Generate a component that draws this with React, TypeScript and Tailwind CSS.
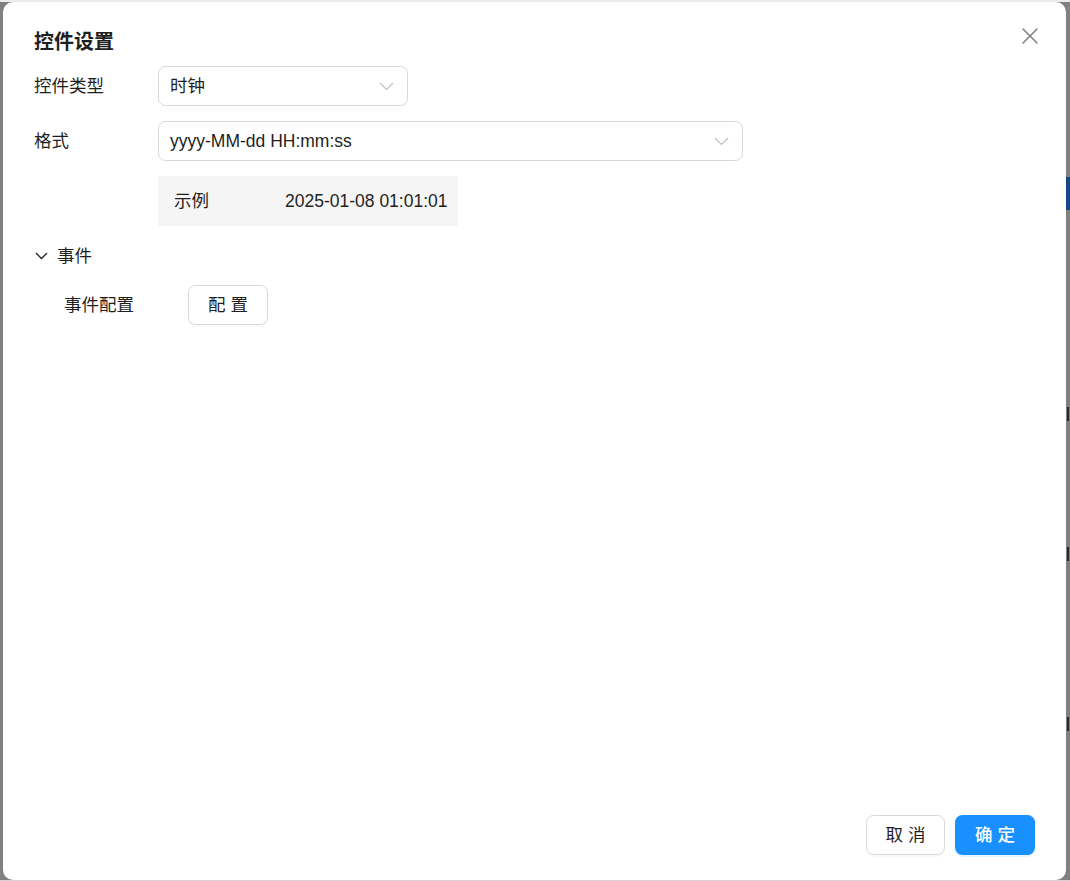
import { X } from "lucide-react";

const font = { fontFamily: '"Liberation Sans", "Noto Sans CJK SC", sans-serif' };

function Select({ value, width }: { value: string; width: string }) {
  return (
    <div
      className={`flex h-10 items-center justify-between rounded-[7.5px] border border-[#d9d9d9] bg-white pl-[11px] pr-[13px] ${width}`}
    >
      <span className="whitespace-nowrap text-[17.5px] text-[#1f1f1f]">{value}</span>
      <svg width="15" height="9" viewBox="0 0 15 9" fill="none" className="shrink-0">
        <path d="M1 1 L7.5 7.5 L14 1" stroke="#bfbfbf" strokeWidth="1.2" />
      </svg>
    </div>
  );
}

function Row({ label, children }: { label: string; children: React.ReactNode }) {
  return (
    <div className="flex items-center">
      <div className="w-[124px] shrink-0 text-[17.5px] text-[#1f1f1f]">{label}</div>
      {children}
    </div>
  );
}

export default function App() {
  return (
    <div className="flex h-[881px] w-[1070px] flex-col overflow-hidden" style={font}>
      <div className="h-[2px] bg-[#ebebeb]" />
      <div className="flex flex-1 bg-[#808080]">
        <div className="w-[3px] shrink-0" />

        {/* dialog */}
        <div className="relative flex flex-1 flex-col rounded-[10px] bg-white px-[31px] pb-[25px] pt-[25px]">
          <button
            type="button"
            className="absolute right-[22px] top-[20px] flex h-7 w-7 items-center justify-center text-[#808080]"
          >
            <X className="h-[28px] w-[28px]" strokeWidth={1.3} />
          </button>

          <h2 className="h-[30px] text-[20px] font-semibold leading-[30px] text-[#1f1f1f]">控件设置</h2>

          <div className="mt-[9px] flex flex-1 flex-col">
            <div className="flex flex-col gap-[15px]">
              <Row label="控件类型">
                <Select value="时钟" width="w-[250px]" />
              </Row>
              <Row label="格式">
                <Select value="yyyy-MM-dd HH:mm:ss" width="w-[585px]" />
              </Row>
              <Row label="">
                <div className="flex h-[50px] w-[300px] items-center whitespace-nowrap bg-[#f5f5f5] px-4 text-[17.5px] text-[#1f1f1f]">
                  <span className="w-[111px] shrink-0">示例</span>
                  <span>2025-01-08 01:01:01</span>
                </div>
              </Row>
            </div>

            <div className="mt-[17px] flex h-[26px] items-center gap-[9px] text-[17.5px] text-[#1f1f1f]">
              <svg width="13" height="8" viewBox="0 0 13 8" fill="none" className="ml-[1px]">
                <path d="M1 1 L6.5 6.5 L12 1" stroke="#1f1f1f" strokeWidth="1.3" />
              </svg>
              <span>事件</span>
            </div>

            <div className="mt-[16px] pl-[30px]">
              <Row label="事件配置">
                <button
                  type="button"
                  className="h-10 w-[80px] whitespace-pre rounded-[7.5px] border border-[#d9d9d9] bg-white text-[17.5px] text-[#1f1f1f] shadow-[0_2px_0_rgba(0,0,0,0.02)]"
                >
                  配 置
                </button>
              </Row>
            </div>
          </div>

          <div className="flex justify-end gap-[10px]">
            <button
              type="button"
              className="h-10 w-[79px] whitespace-pre rounded-[7.5px] border border-[#d9d9d9] bg-white text-[17.5px] text-[#1f1f1f] shadow-[0_2px_0_rgba(0,0,0,0.02)]"
            >
              取 消
            </button>
            <button
              type="button"
              className="h-10 w-[80px] whitespace-pre rounded-[7.5px] bg-[#1890ff] text-[17.5px] font-medium text-white shadow-[0_2px_0_rgba(5,145,255,0.1)]"
            >
              确 定
            </button>
          </div>
        </div>

        {/* page behind the mask */}
        <div className="flex w-[4px] shrink-0 flex-col">
          <div className="mt-[175px] h-[33px] bg-[#0d4a86]" />
          <div className="mt-[197px] ml-[1px] h-[14px] w-[2px] bg-[#2a2a2a]" />
          <div className="mt-[126px] ml-[1px] h-[14px] w-[2px] bg-[#2a2a2a]" />
          <div className="mt-[156px] ml-[1px] h-[14px] w-[2px] bg-[#2a2a2a]" />
        </div>
      </div>
      <div className="h-px bg-[#d9cfd2]" />
    </div>
  );
}
